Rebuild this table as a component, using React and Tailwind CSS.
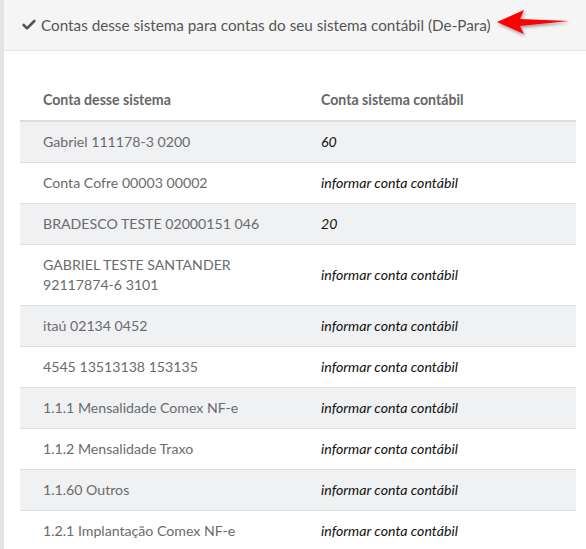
import { Check } from 'lucide-react';

const rows = [
  { conta: 'Gabriel 111178-3 0200', contabil: '60' },
  { conta: 'Conta Cofre 00003 00002', contabil: 'informar conta contábil' },
  { conta: 'BRADESCO TESTE 02000151 046', contabil: '20' },
  { conta: ['GABRIEL TESTE SANTANDER', '92117874-6 3101'], contabil: 'informar conta contábil' },
  { conta: 'itaú 02134 0452', contabil: 'informar conta contábil' },
  { conta: '4545 13513138 153135', contabil: 'informar conta contábil' },
  { conta: '1.1.1 Mensalidade Comex NF-e', contabil: 'informar conta contábil' },
  { conta: '1.1.2 Mensalidade Traxo', contabil: 'informar conta contábil' },
  { conta: '1.1.60 Outros', contabil: 'informar conta contábil' },
  { conta: '1.2.1 Implantação Comex NF-e', contabil: 'informar conta contábil' },
];

const Arrow = () => (
  <svg width="78" height="30" viewBox="0 0 78 30" className="absolute left-[495px] top-[8px]">
    <defs>
      <filter id="sh" x="-20%" y="-40%" width="140%" height="180%">
        <feDropShadow dx="1" dy="2" stdDeviation="1.5" floodColor="#000" floodOpacity="0.35" />
      </filter>
    </defs>
    <path d="M2 14 L29 2 L25 11 L74 13 L25 18 L29 26 Z" fill="#ff0000" filter="url(#sh)" />
  </svg>
);

export default function App() {
  return (
    <div className="relative w-[586px] h-[549px] overflow-hidden bg-white font-['Lato',sans-serif]">
      <div className="flex h-full">
        <div className="w-[4px] shrink-0 bg-[#e4e4e4]" />
        <div className="flex-1 flex flex-col">
          <div className="h-[51px] shrink-0 bg-[#f5f5f5] border-b border-[#e6e6e6] flex items-center pl-[17px] gap-[4px]">
            <Check size={16} strokeWidth={4} className="text-[#555]" />
            <span className="text-[15.25px] text-[#555]">Contas desse sistema para contas do seu sistema contábil (De-Para)</span>
          </div>
          <div className="pt-[29px] pl-[16px] pr-[10px]">
            <table className="w-full border-collapse text-[14.15px]">
              <thead>
                <tr className="border-b-2 border-[#dddddd]">
                  <th className="text-left font-bold text-[#666] pl-[23px] h-[41px] w-[301px] align-middle">Conta desse sistema</th>
                  <th className="text-left font-bold text-[#666] align-middle">Conta sistema contábil</th>
                </tr>
              </thead>
              <tbody>
                {rows.map((r, i) => (
                  <tr key={i} className={`border-b border-[#dddddd] ${i % 2 === 0 ? 'bg-[#f0f1f3]' : 'bg-white'}`}>
                    <td className="pl-[23px] py-[10px] h-[41px] text-[#6b6b6b] align-middle leading-[20px]">
                      {Array.isArray(r.conta) ? r.conta.map((l) => <div key={l}>{l}</div>) : r.conta}
                    </td>
                    <td className="italic text-[#111] align-middle pb-[1px]">{r.contabil}</td>
                  </tr>
                ))}
              </tbody>
            </table>
          </div>
        </div>
      </div>
      <Arrow />
    </div>
  );
}
